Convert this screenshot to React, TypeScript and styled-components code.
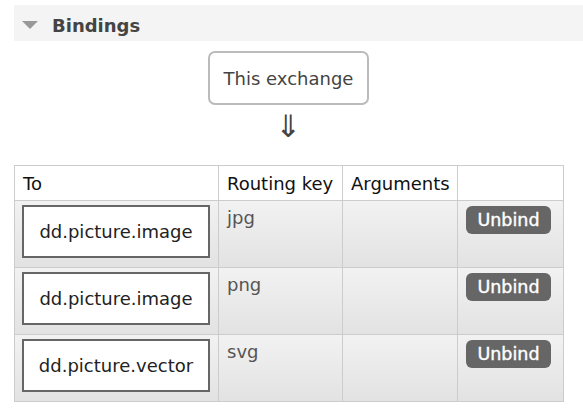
import React from "react";
import styled, { createGlobalStyle } from "styled-components";

const Global = createGlobalStyle`
  html, body { margin: 0; padding: 0; background: #fff; }
  body { font-family: "DejaVu Sans", Verdana, sans-serif; color: #444; }
`;

const Page = styled.div`
  padding: 5px 0 0 14px;
  width: 569px;
`;

const SectionHeader = styled.div`
  display: flex;
  align-items: center;
  height: 36px;
  background: #f4f4f4;
  padding-left: 8px;
  gap: 14px;
`;

const Triangle = styled.span`
  width: 0;
  height: 0;
  border-left: 8px solid transparent;
  border-right: 8px solid transparent;
  border-top: 8px solid #999;
  margin-top: 3px;
`;

const Title = styled.h2`
  margin: 0;
  padding-top: 4px;
  font-size: 18px;
  font-weight: bold;
  color: #444;
`;

const Diagram = styled.div`
  display: flex;
  flex-direction: column;
  align-items: center;
  width: 549px;
  padding-top: 10px;
`;

const ExchangeBox = styled.div`
  display: flex;
  align-items: center;
  justify-content: center;
  width: 161px;
  height: 54px;
  box-sizing: border-box;
  border: 2px solid #bbb;
  border-radius: 7px;
  font-size: 18px;
  color: #444;
`;

const Arrow = styled.div`
  font-size: 31px;
  line-height: 31px;
  height: 31px;
  margin-top: 6px;
  color: #444;
`;

const Table = styled.table`
  margin-top: 23px;
  width: 549px;
  border-collapse: collapse;
  table-layout: fixed;
  font-size: 18px;
`;

const Th = styled.th<{ $w: number }>`
  width: ${(p) => p.$w}px;
  height: 35px;
  box-sizing: border-box;
  border: 1px solid #ccc;
  text-align: left;
  font-weight: normal;
  color: #111;
  padding: 0 8px;
  vertical-align: middle;
`;

const Row = styled.tr`
  height: 67px;
  background: linear-gradient(to bottom, #f2f2f2, #e2e2e2);
`;

const Td = styled.td`
  border: 1px solid #ccc;
  vertical-align: top;
  padding: 4px 8px 0 8px;
  color: #555;
`;

const QueueBox = styled.div`
  display: flex;
  align-items: center;
  justify-content: center;
  width: 188px;
  height: 53px;
  box-sizing: border-box;
  border: 2px solid #666;
  background: #fff;
  color: #222;
  margin-left: -1px;
`;

const Key = styled.div`
  padding-top: 2px;
`;

const Button = styled.button`
  display: inline-flex;
  align-items: center;
  justify-content: center;
  width: 85px;
  height: 28px;
  margin-top: 1px;
  border: none;
  border-radius: 6px;
  background: #666;
  color: #fff;
  font-family: "DejaVu Sans", Verdana, sans-serif;
  font-size: 17.5px;
  font-weight: normal;
  -webkit-text-stroke: 0.4px #fff;
  padding: 0 0 1px 0;
`;

const bindings = [
  { to: "dd.picture.image", key: "jpg" },
  { to: "dd.picture.image", key: "png" },
  { to: "dd.picture.vector", key: "svg" },
];

export default function App() {
  return (
    <>
      <Global />
      <Page>
        <SectionHeader>
          <Triangle />
          <Title>Bindings</Title>
        </SectionHeader>
        <Diagram>
          <ExchangeBox>This exchange</ExchangeBox>
          <Arrow>⇓</Arrow>
        </Diagram>
        <Table>
          <thead>
            <tr>
              <Th $w={204}>To</Th>
              <Th $w={124}>Routing key</Th>
              <Th $w={115}>Arguments</Th>
              <Th $w={106}></Th>
            </tr>
          </thead>
          <tbody>
            {bindings.map((b, i) => (
              <Row key={i}>
                <Td>
                  <QueueBox>{b.to}</QueueBox>
                </Td>
                <Td>
                  <Key>{b.key}</Key>
                </Td>
                <Td></Td>
                <Td>
                  <Button>Unbind</Button>
                </Td>
              </Row>
            ))}
          </tbody>
        </Table>
      </Page>
    </>
  );
}
